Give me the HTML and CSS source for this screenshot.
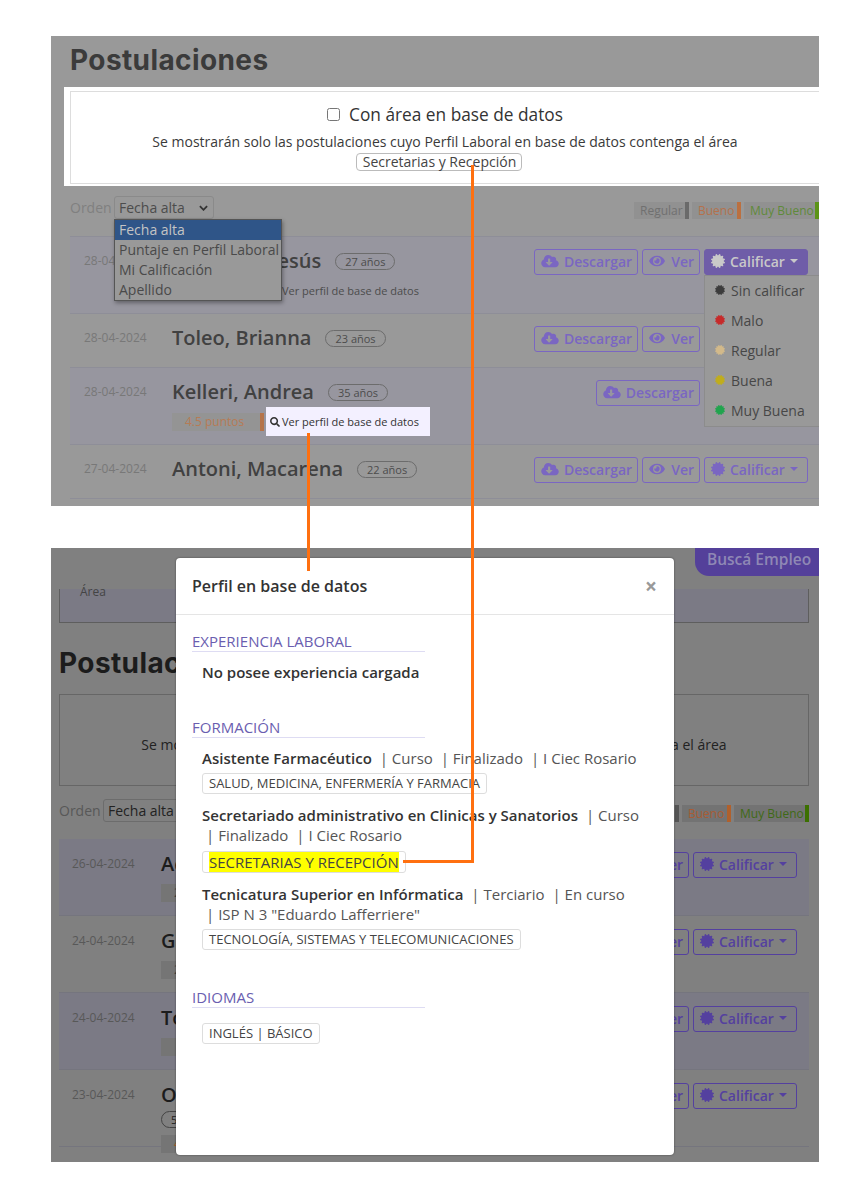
FILE: index.html
```html
<!DOCTYPE html>
<html lang="es">
<head>
<meta charset="utf-8">
<title>Postulaciones</title>
<link rel="stylesheet" href="styles.css">
</head>
<body>
<svg class="defs" aria-hidden="true">
  <symbol id="i-cloud" viewBox="0 0 640 512"><path d="M537.6 226.6c4.1-10.7 6.4-22.4 6.4-34.6 0-53-43-96-96-96-19.7 0-38.1 6-53.3 16.2C367 64.2 315.3 32 256 32c-88.4 0-160 71.6-160 160 0 2.7.1 5.4.2 8.1C40.2 219.8 0 273.2 0 336c0 79.5 64.5 144 144 144h368c70.7 0 128-57.3 128-128 0-61.9-44-113.6-102.4-125.4zm-132.9 88.7L299.3 420.7c-6.2 6.2-16.4 6.2-22.6 0L171.3 315.3c-10.1-10.1-2.9-27.3 11.3-27.3H248V176c0-8.8 7.2-16 16-16h48c8.8 0 16 7.2 16 16v112h65.4c14.2 0 21.4 17.2 11.3 27.3z"/></symbol>
  <symbol id="i-eye" viewBox="0 0 576 512"><path d="M572.52 241.4C518.29 135.59 410.93 64 288 64S57.68 135.64 3.48 241.41a32.35 32.35 0 0 0 0 29.19C57.71 376.41 165.07 448 288 448s230.32-71.64 284.52-177.41a32.35 32.35 0 0 0 0-29.19zM288 400a144 144 0 1 1 144-144 143.93 143.93 0 0 1-144 144zm0-240a95.31 95.31 0 0 0-25.31 3.79 47.85 47.85 0 0 1-66.9 66.9A95.78 95.78 0 1 0 288 160z"/></symbol>
  <symbol id="i-cert" viewBox="0 0 512 512"><path d="M458.622 255.92l45.985-45.005c13.708-12.977 7.316-36.039-10.664-40.339l-62.65-15.99 17.661-62.015c4.991-17.838-11.829-34.663-29.661-29.671l-61.994 17.667-15.984-62.671C337.085.197 313.765-6.276 300.99 7.228L256 53.57 211.01 7.228c-12.63-13.351-36.047-7.234-40.325 10.668l-15.984 62.671-61.995-17.667C74.87 57.907 58.056 74.738 63.046 92.571l17.661 62.015-62.65 15.99C.069 174.878-6.31 197.944 7.392 210.915l45.985 45.005-45.985 45.004c-13.708 12.977-7.316 36.039 10.664 40.339l62.65 15.99-17.661 62.015c-4.991 17.838 11.829 34.663 29.661 29.671l61.994-17.667 15.984 62.671c4.439 18.575 27.696 24.018 40.325 10.668L256 458.61l44.99 46.001c12.5 13.488 35.987 7.486 40.325-10.668l15.984-62.671 61.994 17.667c17.83 4.992 34.653-11.839 29.661-29.671l-17.661-62.015 62.65-15.99c17.98-4.3 24.371-27.362 10.664-40.339l-45.985-45.004z"/></symbol>
  <symbol id="i-search" viewBox="0 0 512 512"><path d="M505 442.7L405.3 343c-4.5-4.5-10.6-7-17-7H372c27.6-35.3 44-79.7 44-128C416 93.1 322.9 0 208 0S0 93.1 0 208s93.1 208 208 208c48.3 0 92.7-16.4 128-44v16.3c0 6.4 2.5 12.5 7 17l99.7 99.7c9.4 9.4 24.6 9.4 33.9 0l28.3-28.3c9.4-9.4 9.4-24.6.1-34zM208 336c-70.7 0-128-57.2-128-128 0-70.7 57.2-128 128-128 70.7 0 128 57.2 128 128 0 70.7-57.2 128-128 128z"/></symbol>
  <symbol id="i-chev" viewBox="0 0 10 6"><path d="M1 1l4 4 4-4" fill="none" stroke="currentColor" stroke-width="2"/></symbol>
</svg>

<main class="sheet">

  <section class="panel panel-light">
    <h1 class="title">Postulaciones</h1>
    <div class="halo">
      <div class="filter filter-open">
        <label class="filter-check"><input type="checkbox"> Con área en base de datos</label>
        <p class="filter-text">Se mostrarán solo las postulaciones cuyo Perfil Laboral en base de datos contenga el área</p>
        <span class="filter-tag">Secretarias y Recepción</span>
      </div>
    </div>

    <div class="toolbar">
      <span class="orden">Orden</span>
      <span class="select">Fecha alta <svg class="chev"><use href="#i-chev"/></svg></span>
      <div class="legend">
        <span class="lg lg-regular">Regular</span>
        <span class="lg lg-bueno">Bueno</span>
        <span class="lg lg-muy">Muy Bueno</span>
      </div>
    </div>

    <div class="list">
      <article class="row row-alt">
        <div class="date">28-04-2024</div>
        <div class="main">
          <div class="name-line"><span class="name">Machado, Jesús</span><span class="age">27 años</span></div>
          <div class="sub">
            <span class="score">4.5 puntos</span>
            <a class="profile"><svg class="ic-search"><use href="#i-search"/></svg>Ver perfil de base de datos</a>
          </div>
        </div>
        <div class="actions">
          <a class="btn"><svg class="ic-cloud"><use href="#i-cloud"/></svg>Descargar</a>
          <a class="btn"><svg class="ic-eye"><use href="#i-eye"/></svg>Ver</a>
          <a class="btn btn-on"><svg class="ic-cert"><use href="#i-cert"/></svg>Calificar<i class="caret"></i></a>
        </div>
      </article>
      <article class="row">
        <div class="date">28-04-2024</div>
        <div class="main">
          <div class="name-line"><span class="name">Toleo, Brianna</span><span class="age">23 años</span></div>
        </div>
        <div class="actions">
          <a class="btn"><svg class="ic-cloud"><use href="#i-cloud"/></svg>Descargar</a>
          <a class="btn"><svg class="ic-eye"><use href="#i-eye"/></svg>Ver</a>
          <a class="btn"><svg class="ic-cert"><use href="#i-cert"/></svg>Calificar<i class="caret"></i></a>
        </div>
      </article>
      <article class="row row-alt">
        <div class="date">28-04-2024</div>
        <div class="main">
          <div class="name-line"><span class="name">Kelleri, Andrea</span><span class="age">35 años</span></div>
          <div class="sub">
            <span class="score">4.5 puntos</span>
            <a class="profile profile-hi"><svg class="ic-search"><use href="#i-search"/></svg>Ver perfil de base de datos</a>
          </div>
        </div>
        <div class="actions">
          <a class="btn"><svg class="ic-cloud"><use href="#i-cloud"/></svg>Descargar</a>
          <a class="btn"><svg class="ic-cert"><use href="#i-cert"/></svg>Calificar<i class="caret"></i></a>
        </div>
      </article>
      <article class="row">
        <div class="date">27-04-2024</div>
        <div class="main">
          <div class="name-line"><span class="name">Antoni, Macarena</span><span class="age">22 años</span></div>
        </div>
        <div class="actions">
          <a class="btn"><svg class="ic-cloud"><use href="#i-cloud"/></svg>Descargar</a>
          <a class="btn"><svg class="ic-eye"><use href="#i-eye"/></svg>Ver</a>
          <a class="btn"><svg class="ic-cert"><use href="#i-cert"/></svg>Calificar<i class="caret"></i></a>
        </div>
      </article>
    </div>

    <ul class="select-menu">
      <li class="opt opt-on">Fecha alta</li>
      <li class="opt">Puntaje en Perfil Laboral</li>
      <li class="opt">Mi Calificación</li>
      <li class="opt">Apellido</li>
    </ul>

    <ul class="rate-menu">
      <li class="rate"><svg class="ic-rate rate-none"><use href="#i-cert"/></svg>Sin calificar</li>
      <li class="rate"><svg class="ic-rate rate-bad"><use href="#i-cert"/></svg>Malo</li>
      <li class="rate"><svg class="ic-rate rate-reg"><use href="#i-cert"/></svg>Regular</li>
      <li class="rate"><svg class="ic-rate rate-good"><use href="#i-cert"/></svg>Buena</li>
      <li class="rate"><svg class="ic-rate rate-top"><use href="#i-cert"/></svg>Muy Buena</li>
    </ul>
  </section>

  <section class="panel panel-dark">
    <div class="top-strip"><a class="cta">Buscá Empleo</a></div>
    <div class="area-card">Área</div>
    <h1 class="title">Postulaciones</h1>
    <div class="filter">
      <label class="filter-check"><input type="checkbox"> Con área en base de datos</label>
      <p class="filter-text">Se mostrarán solo las postulaciones cuyo Perfil Laboral en base de datos contenga el área</p>
      <span class="filter-tag">Secretarias y Recepción</span>
    </div>

    <div class="toolbar">
      <span class="orden">Orden</span>
      <span class="select">Fecha alta <svg class="chev"><use href="#i-chev"/></svg></span>
      <div class="legend">
        <span class="lg lg-regular">Regular</span>
        <span class="lg lg-bueno">Bueno</span>
        <span class="lg lg-muy">Muy Bueno</span>
      </div>
    </div>

    <div class="list">
      <article class="row row-alt">
        <div class="date">26-04-2024</div>
        <div class="main">
          <div class="name-line"><span class="name">Acosta, Lucía</span><span class="age">24 años</span></div>
          <div class="sub"><span class="score score-plain">2.5 puntos</span></div>
        </div>
        <div class="actions">
          <a class="btn"><svg class="ic-eye"><use href="#i-eye"/></svg>Ver</a>
          <a class="btn"><svg class="ic-cert"><use href="#i-cert"/></svg>Calificar<i class="caret"></i></a>
        </div>
      </article>
      <article class="row">
        <div class="date">24-04-2024</div>
        <div class="main">
          <div class="name-line"><span class="name">Gauna, Sofía</span><span class="age">31 años</span></div>
          <div class="sub"><span class="score score-plain">2 puntos</span></div>
        </div>
        <div class="actions">
          <a class="btn"><svg class="ic-eye"><use href="#i-eye"/></svg>Ver</a>
          <a class="btn"><svg class="ic-cert"><use href="#i-cert"/></svg>Calificar<i class="caret"></i></a>
        </div>
      </article>
      <article class="row row-alt">
        <div class="date">24-04-2024</div>
        <div class="main">
          <div class="name-line"><span class="name">Torres, Camila</span><span class="age">28 años</span></div>
          <div class="sub"><span class="score score-plain">&nbsp;</span></div>
        </div>
        <div class="actions">
          <a class="btn"><svg class="ic-eye"><use href="#i-eye"/></svg>Ver</a>
          <a class="btn"><svg class="ic-cert"><use href="#i-cert"/></svg>Calificar<i class="caret"></i></a>
        </div>
      </article>
      <article class="row">
        <div class="date">23-04-2024</div>
        <div class="main">
          <div class="name-line name-line-stack"><span class="name">Ortiz, Valentina</span><span class="age">52 años</span></div>
          <div class="sub"><span class="score">4 puntos</span></div>
        </div>
        <div class="actions">
          <a class="btn"><svg class="ic-eye"><use href="#i-eye"/></svg>Ver</a>
          <a class="btn"><svg class="ic-cert"><use href="#i-cert"/></svg>Calificar<i class="caret"></i></a>
        </div>
      </article>
    </div>

    <aside class="modal">
      <header class="modal-head">
        <h2 class="modal-title">Perfil en base de datos</h2>
        <span class="modal-close">×</span>
      </header>
      <div class="modal-body">
        <h3 class="sec">EXPERIENCIA LABORAL</h3>
        <p class="empty">No posee experiencia cargada</p>

        <h3 class="sec sec-next">FORMACIÓN</h3>
        <div class="item">
          <p class="item-line"><b>Asistente Farmacéutico</b> <span class="sep">| Curso</span> <span class="sep">| Finalizado</span> <span class="sep">| I Ciec Rosario</span></p>
          <span class="tag">SALUD, MEDICINA, ENFERMERÍA Y FARMACIA</span>
        </div>
        <div class="item">
          <p class="item-line"><b>Secretariado administrativo en Clinicas y Sanatorios</b> <span class="sep">| Curso</span> <span class="sep">| Finalizado</span> <span class="sep">| I Ciec Rosario</span></p>
          <span class="tag tag-hi"><mark class="mark">SECRETARIAS Y RECEPCIÓN</mark></span>
        </div>
        <div class="item">
          <p class="item-line"><b>Tecnicatura Superior en Infórmatica</b> <span class="sep">| Terciario</span> <span class="sep">| En curso</span> <span class="sep">| ISP N 3 "Eduardo Lafferriere"</span></p>
          <span class="tag">TECNOLOGÍA, SISTEMAS Y TELECOMUNICACIONES</span>
        </div>

        <h3 class="sec sec-lang">IDIOMAS</h3>
        <span class="tag tag-lang">INGLÉS | BÁSICO</span>
      </div>
    </aside>
  </section>

  <div class="link link-v1"></div>
  <div class="link link-v2"></div>
  <div class="link link-h2"></div>
</main>
</body>
</html>
```

FILE: styles.css
```css
* { box-sizing: border-box; }
html, body { margin: 0; padding: 0; background: #fff; }
body { font-family: "Open Sans", "Noto Sans", sans-serif; color: #333; }
.defs { position: absolute; width: 0; height: 0; }
h1, h2, h3, p, ul { margin: 0; padding: 0; }
ul { list-style: none; }

.sheet { position: relative; width: 868px; height: 1199px; padding: 36px 49px 37px 51px; overflow: hidden; }

.panel { position: relative; width: 768px; overflow: hidden; }
.panel-light { height: 470px; padding: 3px 0 0 19px; background: #999; margin-bottom: 42px; }
.panel-dark { height: 614px; padding: 0 10px 0 8px; background: #808080; }

.title { font-family: Inter, "Liberation Sans", sans-serif; font-size: 28px; letter-spacing: .4px; line-height: 42px; font-weight: 700; color: #3b3b3b; }
.panel-dark .title { color: #1c1c1c; margin-top: 19px; }

/* filter box */
.halo { margin: 6px 0 0 -6px; padding: 4px 0 2px 6px; background: #fff; height: 99px; }
.filter { border: 1px solid #666; padding: 11px 0 12px; text-align: center; height: 92px; margin-top: 10px; }
.filter-open { border: 1px solid #ddd; border-right: 0; width: 800px; margin-top: 0; height: 93px; padding-right: 51px; }
.filter-check { display: flex; justify-content: center; align-items: center; gap: 9px; height: 22px; font-size: 17.3px; color: #333; }
.filter-check input { margin: 0; width: 13px; height: 13px; }
.filter-text { font-size: 14px; line-height: 20px; margin-top: 7px; color: #3a3a3a; }
.filter-tag { display: block; width: fit-content; height: 18px; line-height: 16px; margin: 1px auto 0; position: relative; left: -6px; padding: 0 5px 0 6px; font-size: 14px; border: 1px solid #bbb; border-radius: 4px; color: #444; }
.panel-dark .filter-text { color: #222; }

/* toolbar */
.toolbar { display: flex; align-items: center; height: 23px; margin-top: 10px; font-size: 14px; }
.panel-dark .toolbar { margin-top: 13px; }
.orden { color: #808080; width: 44px; flex: none; }
.panel-dark .orden { color: #585858; }
.select { display: flex; align-items: center; justify-content: space-between; width: 100px; height: 23px; padding: 0 5px 0 4px; border: 1px solid #8a8a8a; border-radius: 3px; color: #4c4c4c; }
.panel-dark .select { border-color: #6c6c6c; color: #222; }
.chev { width: 9px; height: 6px; color: #333; }
.legend { display: flex; gap: 3px; margin-left: auto; height: 17px; margin-top: 5px; }
.lg { display: block; height: 17px; line-height: 17px; font-size: 12px; padding: 0 0 0 6px; border-right: 4px solid; background: #919191; white-space: nowrap; }
.lg-regular { width: 55px; color: #707070; border-color: #6a6a6a; }
.lg-bueno { width: 49px; color: #b4714c; border-color: #bb7040; }
.lg-muy { width: 75px; color: #5f8a3a; border-color: #5c9418; }
.panel-dark .lg { background: #737373; }
.panel-dark .lg-regular { color: #565656; border-color: #555; }
.panel-dark .lg-bueno { color: #a85c34; border-color: #b0602c; }
.panel-dark .lg-muy { color: #3f6a16; border-color: #3c7000; }

/* list rows */
.list { margin-top: 17px; border-top: 1px solid #8e8e98; }
.panel-dark .list { border-top: 0; }
.row { display: flex; align-items: flex-start; padding: 9px 11px 0 0; min-height: 54px; border-bottom: 1px solid #8e8e98; }
.panel-dark .row { padding: 10px 12px 0 0; border-bottom-color: #75757e; height: 77px; }
.row-alt { background: #97969f; }
.panel-dark .row-alt { background: #7b7a85; }
.date { width: 102px; flex: none; padding-left: 14px; line-height: 30px; font-size: 12px; color: #787878; }
.panel-dark .date { padding-left: 13px; color: #585858; }
.main { flex: 1; min-width: 0; padding-bottom: 8px; }
.name-line { display: flex; align-items: center; height: 30px; gap: 14px; }
.name-line-stack { flex-direction: column; align-items: flex-start; gap: 1px; height: 50px; }
.name { font-size: 20px; line-height: 30px; font-weight: 600; color: #414141; white-space: nowrap; }
.panel-dark .name { color: #1c1c1c; }
.age { display: block; flex: none; height: 17px; line-height: 15px; padding: 0 9px; font-size: 11px; border: 1px solid #6c6c6c; border-radius: 9px; color: #4c4c4c; }
.panel-dark .age { border-color: #444; color: #222; }
.sub { display: flex; align-items: center; height: 29px; }
.panel-dark .sub { align-items: flex-start; height: 23px; }
.score { display: block; width: 92px; height: 18px; line-height: 18px; padding-left: 13px; font-size: 12px; color: #b77b55; background: #949494; border-right: 4px solid #b5744a; }
.panel-dark .score { background: #757575; margin-top: 5px; color: #a8622e; }
.panel-dark .score-plain { border-right-color: #666; color: #444; }
.profile { display: flex; align-items: center; gap: 2px; height: 29px; margin-left: 2px; padding: 0 11px 0 4px; font-size: 11px; color: #4c4c4c; white-space: nowrap; }
.profile-hi { background: #f3f0ff; color: #333; }
.ic-search { width: 10px; height: 10px; fill: currentColor; }

/* buttons */
.actions { display: flex; gap: 4px; flex: none; margin-top: 3px; }
.btn { display: flex; align-items: center; height: 26px; padding: 0 5px 2px 6px; font-size: 14px; font-weight: 600; color: #7a66c2; border: 1px solid #7a66c2; border-radius: 3px; white-space: nowrap; }
.panel-dark .btn { color: #54409f; border-color: #54409f; }
.btn svg { fill: currentColor; }
.ic-cloud { width: 18px; height: 14px; margin-right: 5px; }
.ic-eye { width: 16px; height: 14px; margin-right: 6px; }
.ic-cert { width: 14px; height: 14px; margin-right: 5px; }
.btn:has(.caret) { width: 104px; }
.caret { width: 0; height: 0; margin-left: auto; margin-right: 4px; border: 4px solid transparent; border-top-color: currentColor; border-bottom: 0; }
.btn-on { background: #6f5da8; border-color: #6f5da8; color: #c9c9c9; }

/* native-looking dropdown */
.select-menu { position: absolute; left: 63px; top: 183px; width: 168px; height: 82px; background: #999; border: 1px solid #555; box-shadow: 1px 2px 4px rgba(0,0,0,.35); font-size: 14px; color: #4a4a4a; }
.opt { height: 20px; line-height: 20px; padding-left: 4px; white-space: nowrap; }
.opt-on { background: #2f5588; color: #c4c4c4; }

.rate-menu { position: absolute; left: 653px; top: 239px; width: 130px; height: 152px; background: #999; border: 1px solid #8c8c8c; font-size: 14px; color: #474747; }
.rate { display: flex; align-items: center; height: 30px; padding: 0 0 2px 10px; }
.ic-rate { width: 10px; height: 10px; margin-right: 6px; fill: currentColor; flex: none; }
.rate-none { color: #3c3c3c; }
.rate-bad { color: #c62a2a; }
.rate-reg { color: #d2b98a; }
.rate-good { color: #c0ad1c; }
.rate-top { color: #21a44e; }

/* lower panel header */
.top-strip { display: flex; justify-content: flex-end; height: 41px; margin-right: -10px; }
.cta { display: block; width: 124px; height: 28px; line-height: 22px; padding-left: 12px; font-size: 15.5px; font-weight: 600; color: #8f88b5; background: #54409a; border-radius: 0 0 0 14px; }
.area-card { height: 34px; padding: 0 0 0 20px; line-height: 6px; font-size: 12px; color: #444; background: #7b7a85; border: 1px solid #5e5e5e; border-top: 0; }

/* modal */
.modal { position: absolute; left: 125px; top: 10px; width: 498px; height: 597px; background: #fff; border-radius: 4px; box-shadow: 0 0 2px rgba(0,0,0,.5); }
.modal-head { display: flex; align-items: center; justify-content: space-between; height: 57px; padding: 0 17px 0 16px; border-bottom: 1px solid #e5e5e5; }
.modal-title { font-size: 16px; font-weight: 600; color: #333; }
.modal-close { font-size: 21px; font-weight: 700; line-height: 1; color: #999; }
.modal-body { padding: 17px 16px 0; }
.sec { width: 233px; height: 20px; line-height: 18px; font-size: 15px; font-weight: 400; color: #6a5eb0; border-bottom: 1px solid #dedcf3; }
.sec-next { margin-top: 35px; }
.sec-lang { margin-top: 38px; }
.empty { margin: 10px 0 0 10px; font-size: 15px; line-height: 20px; font-weight: 600; color: #333; }
.empty + .sec-next { margin-top: 36px; }
.item { margin: 10px 0 0 10px; }
.item + .item { margin-top: 11px; }
.item-line { font-size: 15px; line-height: 20px; color: #555; }
.item-line b { font-weight: 600; color: #333; }
.sep { display: inline-block; margin-left: 4px; }
.tag { display: block; width: fit-content; margin-top: 5px; height: 21px; line-height: 19px; padding: 0 6px; font-size: 13px; color: #444; border: 1px solid #ddd; border-radius: 3px; }
.tag-hi { height: 22px; line-height: 20px; margin-top: 6px; font-size: 15px; }
.mark { display: block; background: #ff0; color: #444; }
.tag-lang { margin: 15px 0 0 10px; }

/* connectors */
.link { position: absolute; background: #ff7010; }
.link-v1 { left: 307px; top: 433px; width: 3px; height: 138px; }
.link-v2 { left: 471px; top: 165px; width: 3px; height: 698px; }
.link-h2 { left: 403px; top: 860px; width: 71px; height: 3px; }
```
